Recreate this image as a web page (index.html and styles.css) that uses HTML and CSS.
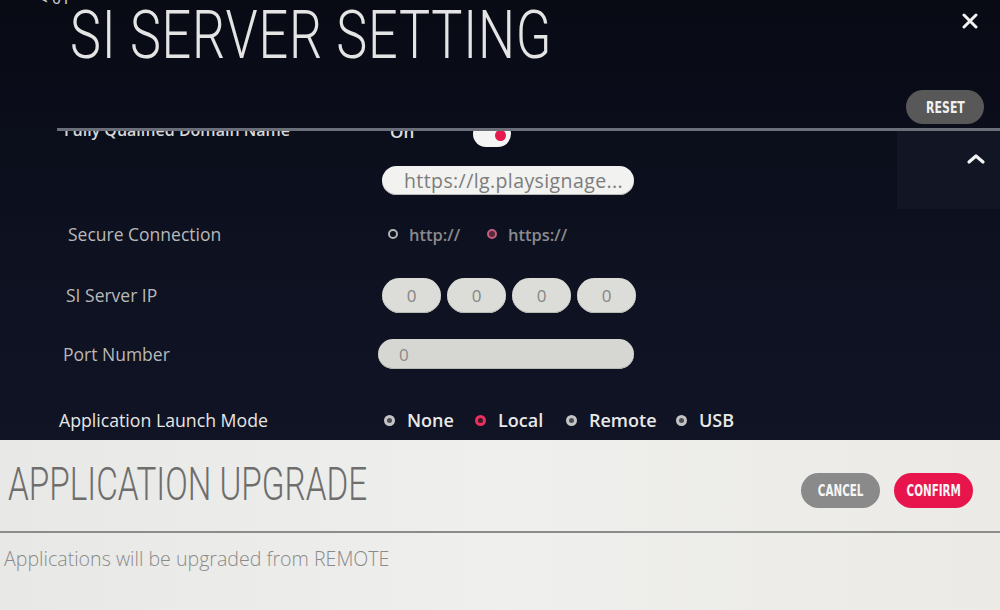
FILE: index.html
```html
<!DOCTYPE html>
<html>
<head>
<meta charset="utf-8">
<link rel="stylesheet" href="styles.css">
</head>
<body>
<div class="screen">
  <header class="header">
    <div class="back">&lt; 01</div>
    <h1 class="title"><span class="squeeze">SI SERVER SETTING</span></h1>
    <div class="actions">
      <svg class="close" width="16" height="16" viewBox="0 0 16 16"><path d="M2 2L14 14M14 2L2 14" stroke="#f2f2f2" stroke-width="3" stroke-linecap="round"/></svg>
      <button class="reset"><span class="narrow">RESET</span></button>
    </div>
  </header>
  <div class="rule"></div>
  <main class="content">
    <div class="list">
      <div class="row r-fqdn">
        <div class="label">Fully Qualified Domain Name</div>
        <div class="value"><span class="on">On</span><span class="toggle"><span class="knob"></span></span></div>
      </div>
      <div class="row r-url">
        <div class="label"></div>
        <div class="value"><div class="field url">https://lg.playsignage...</div></div>
      </div>
      <div class="row r-secure">
        <div class="label">Secure Connection</div>
        <div class="value radios dim">
          <span class="radio w-http"><i class="dot"></i>http://</span>
          <span class="radio"><i class="dot pinkdim"></i>https://</span>
        </div>
      </div>
      <div class="row r-ip">
        <div class="label">SI Server IP</div>
        <div class="value ips">
          <div class="field ip">0</div>
          <div class="field ip">0</div>
          <div class="field ip">0</div>
          <div class="field ip">0</div>
        </div>
      </div>
      <div class="row r-port">
        <div class="label">Port Number</div>
        <div class="value"><div class="field port">0</div></div>
      </div>
      <div class="row r-mode">
        <div class="label bright">Application Launch Mode</div>
        <div class="value radios bright">
          <span class="radio w-none"><i class="dot"></i>None</span>
          <span class="radio w-local"><i class="dot pink"></i>Local</span>
          <span class="radio w-remote"><i class="dot"></i>Remote</span>
          <span class="radio"><i class="dot"></i>USB</span>
        </div>
      </div>
    </div>
    <aside class="scrollcol">
      <div class="scrollup">
        <svg width="20" height="12" viewBox="0 0 20 12"><path d="M3 9L10 3L17 9" stroke="#f4f4f4" stroke-width="3.2" fill="none" stroke-linecap="round" stroke-linejoin="round"/></svg>
      </div>
    </aside>
  </main>
  <section class="dialog">
    <div class="dlg-head">
      <h2 class="dlg-title"><span class="squeeze2">APPLICATION UPGRADE</span></h2>
      <div class="dlg-buttons">
        <button class="btn cancel"><span class="narrow">CANCEL</span></button>
        <button class="btn confirm"><span class="narrow">CONFIRM</span></button>
      </div>
    </div>
    <div class="dlg-rule"></div>
    <p class="dlg-text">Applications will be upgraded from REMOTE</p>
  </section>
</div>
</body>
</html>
```

FILE: styles.css
```css
* { box-sizing: border-box; }
html, body { margin: 0; padding: 0; background: #0b0e1a; }
.screen {
  width: 1000px; height: 610px; overflow: hidden;
  display: flex; flex-direction: column;
  background: linear-gradient(180deg, #080a14 0%, #0d1120 40%, #121628 100%);
  font-family: "Open Sans", "Noto Sans", sans-serif;
}
.header {
  height: 128px; display: flex; align-items: flex-start;
  padding-left: 40px; padding-right: 16px;
}
.back {
  width: 30px; margin-top: -9px; color: #c8c8c8; white-space: nowrap;
  font-family: "Roboto", sans-serif; font-size: 16px; line-height: 16px;
}
.title {
  margin: 0; flex: 1; color: #e4e4e4;
  font-family: "Roboto", sans-serif; font-weight: 300;
  font-size: 66px; line-height: 66px; margin-top: 3px; letter-spacing: 1px;
  white-space: nowrap;
}
.squeeze { display: inline-block; transform: scaleX(0.79); transform-origin: left center; }
.actions { display: flex; flex-direction: column; align-items: flex-end; }
.close { margin-top: 13px; margin-right: 6px; }
.narrow { display: inline-block; transform: scaleX(0.76); }
.reset {
  margin-top: 61px; width: 78px; height: 34px; border: none; border-radius: 17px;
  background: #585858; color: #f0f0f0;
  font-family: "DejaVu Sans Condensed", "DejaVu Sans", sans-serif; font-weight: bold;
  font-size: 16px; padding: 0;
}
.rule { height: 3px; margin-left: 57px; background: #6b6f79; }
.content { height: 309px; display: flex; overflow: hidden; }
.list { flex: 1; margin-top: -17px; padding-left: 64px; }
.row { display: grid; grid-template-columns: 318px 1fr; align-items: center; }
.label { color: #b9b9b9; font-size: 17.5px; white-space: nowrap; }
.label.bright { color: #e6e6e6; font-size: 17.7px; margin-left: -5px; }
.value { display: flex; align-items: center; }
.r-fqdn { height: 34px; }
.r-fqdn .label { font-size: 16px; color: #d8d8d8; font-weight: 600; margin-top: -2px; }
.on { color: #e0e0e0; font-size: 17px; font-weight: 600; margin-left: 8px; width: 83px; }
.toggle {
  width: 38px; height: 26px; border-radius: 13px; background: #f4f4f4;
  position: relative; margin-top: 6px;
}
.knob {
  position: absolute; right: 5px; top: 9px; width: 11px; height: 11px;
  border-radius: 50%; background: #e41c4e;
}
.r-url { height: 64px; }
.field {
  background: #dcdcd8; border-radius: 16px; color: #7a7a7a;
  display: flex; align-items: center;
  box-shadow: inset 0 -1px 0 #b8b8b4;
}
.url { width: 252px; height: 29px; background: #f2f2f0; padding-left: 22px; font-size: 19.5px; letter-spacing: 0.4px; color: #7c7c7c; border-radius: 15px; white-space: nowrap; overflow: hidden; }
.r-secure { height: 44px; }
.r-secure .label { padding-left: 4px; }
.radio { display: inline-flex; align-items: center; font-size: 16px; }
.radios.dim { color: #8a8a8e; font-weight: 600; }
.radios.dim .radio { font-size: 16.5px; margin-left: 6px; }
.w-http { width: 93px; }
.dot {
  display: inline-block; width: 10px; height: 10px; border-radius: 50%;
  border: 2.5px solid #b4b4b4; margin-right: 11px;
}
.dot.pinkdim { border-color: #c2607e; background: #5a2a3a; }
.dot.pink { border-color: #e8325e; }
.radios.bright { color: #e8e8e8; font-weight: 600; }
.radios.bright .radio { font-size: 18px; margin-left: 2px; }
.radios.bright .dot { width: 11px; height: 11px; border-width: 3px; margin-right: 12px; border-color: #c4c4c4; background: #4a4c56; }
.radios.bright .dot.pink { border-color: #ea2e5e; background: #3a1a26; }
.w-none { width: 89px; }
.w-local { width: 89px; }
.w-remote { width: 108px; }
.r-ip { height: 78px; }
.r-ip .label { padding-left: 2px; }
.ips { gap: 6px; }
.ip { width: 59px; height: 35px; border-radius: 18px; justify-content: center; font-size: 17px; color: #858585; }
.r-port { height: 40px; }
.r-port .label { margin-left: -1px; }
.port { width: 256px; height: 30px; margin-left: -4px; padding-left: 21px; font-size: 17px; color: #8a8a8a; border-radius: 15px; background: #d6d6d2; }
.r-mode { height: 92px; }
.scrollcol { width: 103px; }
.scrollup {
  height: 78px; background: #111524; display: flex; justify-content: center;
  padding-top: 22px; padding-left: 54px;
}
.dialog {
  height: 170px; background: linear-gradient(90deg, #e8e8e6 0%, #efefed 50%, #ebeae6 100%);
  display: flex; flex-direction: column;
}
.dlg-head { height: 91px; display: flex; align-items: flex-start; padding-left: 8px; padding-right: 27px; }
.dlg-title {
  flex: 1; margin: 0; margin-top: 21px; color: #6e6e6e;
  font-family: "Roboto", sans-serif; font-weight: 300; font-size: 46px; line-height: 46px; white-space: nowrap;
}
.squeeze2 { display: inline-block; transform: scaleX(0.723); transform-origin: left center; }
.dlg-buttons { display: flex; gap: 14px; margin-top: 33px; }
.btn {
  width: 79px; height: 35px; border: none; border-radius: 18px; color: #f6f6f6; padding: 0;
  font-family: "DejaVu Sans Condensed", "DejaVu Sans", sans-serif; font-weight: bold; font-size: 16px;
}
.btn .narrow { transform: scaleX(0.72); }
.cancel { background: #8a8a8a; }
.confirm { background: #e8154c; }
.dlg-rule { height: 2px; background: #8c8c8c; }
.dlg-text { margin: 0; padding-left: 4px; margin-top: 12px; font-size: 19.6px; color: #8a8a8a; font-weight: 300; white-space: nowrap; }
```
